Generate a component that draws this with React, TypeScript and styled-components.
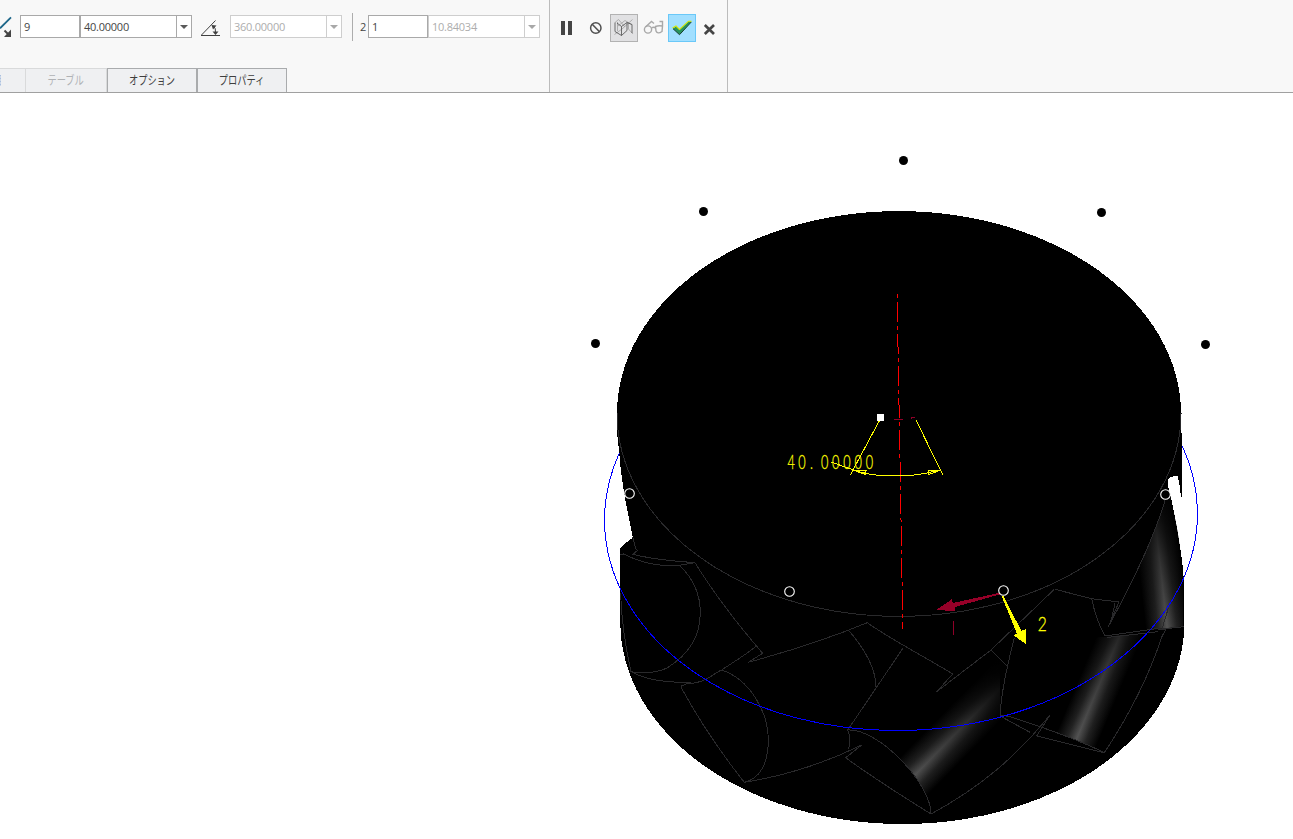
import React from "react";
import styled, { createGlobalStyle } from "styled-components";

const GlobalStyle = createGlobalStyle`
  html, body { margin: 0; padding: 0; background: #fff; overflow: hidden; }
  * { box-sizing: border-box; }
`;

const uiFont = `"Open Sans", "Noto Sans CJK JP", sans-serif`;

const Page = styled.div`
  display: flex;
  flex-direction: column;
  width: 1293px;
  height: 839px;
  overflow: hidden;
  background: #fff;
  font-family: ${uiFont};
`;

const Ribbon = styled.header`
  display: flex;
  flex: none;
  height: 93px;
  background: #f8f8f8;
  border-bottom: 1px solid #a0a0a0;
`;

const SettingsGroup = styled.section`
  display: flex;
  flex-direction: column;
  justify-content: space-between;
  width: 550px;
  padding-top: 13px;
  border-right: 1px solid #bcbcbc;
`;

const ActionGroup = styled.section`
  display: flex;
  align-items: flex-start;
  width: 178px;
  padding: 14px 0 0 4px;
  border-right: 1px solid #bcbcbc;
`;

const Controls = styled.div`
  display: flex;
  align-items: flex-start;
  height: 30px;
`;

const Glyph = styled.svg<{ $before?: number; $gap?: number }>`
  display: block;
  flex: none;
  margin-left: ${(p) => p.$before ?? 0}px;
  margin-right: ${(p) => p.$gap ?? 0}px;
`;

const Field = styled.div<{ $width: number; $disabled?: boolean }>`
  display: flex;
  flex: none;
  width: ${(p) => p.$width}px;
  height: 23px;
  margin-top: 2px;
  border: 1px solid ${(p) => (p.$disabled ? "#cecece" : "#a9a9a9")};
  background: #fff;
  color: ${(p) => (p.$disabled ? "#adadad" : "#454545")};
  font-size: 11px;
  line-height: 22px;
  letter-spacing: -0.25px;
`;

const Value = styled.span`
  flex: 1;
  padding-left: 3px;
`;

const DropButton = styled.span<{ $disabled?: boolean }>`
  display: flex;
  align-items: center;
  justify-content: center;
  width: 15px;
  border-left: 1px solid ${(p) => (p.$disabled ? "#cecece" : "#a9a9a9")};
  &::after {
    content: "";
    border: 4px solid transparent;
    border-bottom: 0;
    border-top-color: ${(p) => (p.$disabled ? "#a8a8a8" : "#5a5a5a")};
  }
`;

const Divider = styled.span`
  width: 1px;
  height: 28px;
  margin: 0 7px 0 10px;
  background: #adadad;
`;

const DirectionLabel = styled.span`
  width: 8px;
  margin-top: 3px;
  color: #454545;
  font-size: 11px;
  line-height: 22px;
`;

const Tabs = styled.nav`
  display: flex;
  height: 24px;
`;

const Tab = styled.div<{ $width: number; $disabled?: boolean }>`
  display: flex;
  align-items: center;
  justify-content: center;
  flex: none;
  width: ${(p) => p.$width}px;
  border: 1px solid ${(p) => (p.$disabled ? "#d9dadb" : "#a9abad")};
  border-bottom: 0;
  background: #eff0f2;
  color: ${(p) => (p.$disabled ? "#b0b2b5" : "#3e3e3e")};
  font-size: 12px;
  line-height: 20px;
`;

const NarrowText = styled.span`
  flex: none;
  white-space: nowrap;
  transform: scaleX(0.77);
`;

const ClippedTab = styled.div`
  width: 25px;
  border-top: 1px solid #d9dadb;
  background: #eff0f2;
  padding-top: 6px;
`;

const ToolButton = styled.button<{ $tone?: "pressed" | "accept"; $gap?: number }>`
  display: flex;
  align-items: center;
  justify-content: center;
  width: 28px;
  height: 28px;
  margin: 0 ${(p) => p.$gap ?? 0}px 0 0;
  padding: 0;
  border: 1px solid
    ${(p) => (p.$tone === "pressed" ? "#b2b2b2" : p.$tone === "accept" ? "#6ac8f8" : "transparent")};
  background: ${(p) => (p.$tone === "pressed" ? "#e1e1e3" : p.$tone === "accept" ? "#a1dfff" : "transparent")};
`;

const Viewport = styled.main`
  flex: none;
  height: 746px;
`;

const Scene = styled.svg`
  display: block;
`;

const edges = [
  "M617 413.5 A282 203 0 0 0 1181 413.5",
  "M620 554.3 H625 M623 553.5 C640 563 661 567 679 565.3 L695 562.7",
  "M632.7 537 L636 549.3 L637.7 550.3 L633.3 554 L631.7 554 C650 559 672 561 695 562.7",
  "M679.3 565.3 C692 577 700.3 592 700.3 613 C700.3 636 688 655 667 668 C655 673.5 642 673.5 631 671.7",
  "M695 562.7 C713 592 733 619 762.7 653.3 L748.3 662.3 C790 651 830 638 867.3 622.7 C890 639 920 654 952.7 674 L936.7 691.7 L991 650 L1054.3 589.3",
  "M620.5 593 C622 625 626 650 631 671.7 C648 681 668 683 691.7 682",
  "M687 683.5 C705 684 712 674 721.7 670 C735 661 744 656 755.7 646.7",
  "M690 682.7 L681.7 685.7 L681 687.3 C700 722 721 753 744.3 782.3",
  "M721.7 670 C749 679 768.3 711 768.3 740 C768.3 763 760 779 744.3 782.3",
  "M744.3 782.3 C784 776 825 763 861.7 745 L845.7 757.7 C872 777 902 796 931 814",
  "M849.3 631 C862 646 876 667 876 687.3",
  "M903.3 647.7 C884 676 866 703 847.7 730 Q851.5 738 848.7 749",
  "M847.7 730 C878 728 931 783 931 814",
  "M931 814 C979 788 1015 758 1050 715 L1036.7 736 L1104.3 752.7",
  "M991 650 L1007.3 666",
  "M1014.3 638.3 C1007 666 1001 695 1000 716 L1030 732.3",
  "M1000 715 L1010 716.7 C1042 727 1075 738 1104.3 752.7",
  "M1055 589.3 L1091.7 598.7 L1119 602 L1108.3 626.7 M1115 603 L1111 622",
  "M1166 497 C1155 535 1138 570 1119 606.7 L1108.3 626.7",
  "M1091.7 598.7 Q1096 620 1105 636 L1158 628.5 M1107 637.5 L1158 631.7 M1158 629.5 L1184 626.7",
  "M1168.3 608.3 L1162 629 L1166 629 L1161.7 637 C1148 679 1128 717 1104.3 752.7",
];

const remoteMembers = [
  [903.5, 160.5],
  [703.5, 211.5],
  [1101.5, 212.5],
  [595.5, 343.5],
  [1205.5, 344.5],
];

const nearMembers = [
  [629.5, 493.5],
  [789.5, 591.5],
  [1003.5, 590.5],
  [1165.5, 494.5],
];

const dimensionDigits = [787.5, 798.3, 810, 821, 832, 843.3, 854.5, 865.8];

function PatternModel() {
  return (
    <Scene width="1293" height="746" viewBox="0 93 1293 746">
      <defs>
        <linearGradient id="across">
          <stop offset="0" stopColor="#000" />
          <stop offset="0.28" stopColor="#222" />
          <stop offset="0.5" stopColor="#525252" />
          <stop offset="0.72" stopColor="#222" />
          <stop offset="1" stopColor="#000" />
        </linearGradient>
        <linearGradient id="along" x1="0" y1="0" x2="0" y2="1">
          <stop offset="0" stopColor="#000" />
          <stop offset="0.45" stopColor="#000" stopOpacity="0.4" />
          <stop offset="0.9" stopColor="#000" stopOpacity="0" />
        </linearGradient>
        <clipPath id="pocketFront">
          <path d="M847.7 730 C878 728 931 783 931 814 L1000 760 V640 H850 Z" />
        </clipPath>
        <clipPath id="pocketRight">
          <path d="M1000 716 L1010 716.7 C1042 727 1075 738 1104.3 752.7 L1162 637 L1158 631.7 L1105 637 L1010 640 Z" />
        </clipPath>
        <clipPath id="pocketSide">
          <path d="M1166 497 C1155 535 1138 570 1119 606.7 L1108 634 L1158 629 L1183 626.5 V590 C1182 550 1177 525 1170 497 Z" />
        </clipPath>
        <clipPath id="frontArc">
          <path d="M590 453 H900 V446 H1210 V740 H590 Z" />
        </clipPath>
      </defs>

      <g shapeRendering="crispEdges">
        <path
          fill="#000"
          d="M617 413.5 A282 202.5 0 0 1 1181 413.5 L1181.7 440 V497 H1181 L1179.3 483 L1177.5 475.7 L1170 477 L1168.3 479 V487 C1172 500 1176 522 1180 547 Q1184 570 1184 590 L1184.5 622 A282 202 0 0 1 620.3 622 L619.7 549 Q627 541 633 538 Q621 483 619.3 453 L617.3 435 Z"
        />
      </g>

      <g clipPath="url(#pocketFront)">
        <g transform="translate(915 775) rotate(44.5)">
          <rect x="-23" y="-140" width="46" height="160" fill="url(#across)" />
          <rect x="-24" y="-141" width="48" height="162" fill="url(#along)" />
        </g>
      </g>
      <g clipPath="url(#pocketRight)">
        <g transform="translate(1077 738) rotate(22.7)">
          <rect x="-21" y="-130" width="42" height="145" fill="url(#across)" />
          <rect x="-22" y="-175" width="44" height="191" fill="url(#along)" />
        </g>
      </g>
      <g clipPath="url(#pocketSide)">
        <g transform="translate(1169 630) rotate(-6.4)">
          <rect x="-23" y="-140" width="43" height="150" fill="url(#across)" />
          <rect x="-24" y="-141" width="45" height="152" fill="url(#along)" />
        </g>
      </g>

      <g fill="none" shapeRendering="crispEdges">
        <g stroke="#29292b">
          {edges.map((d) => (
            <path key={d} d={d} />
          ))}
        </g>
        <g clipPath="url(#frontArc)">
          <ellipse cx="901" cy="516.7" rx="296.5" ry="213.8" transform="rotate(-1.3 901 516.7)" stroke="#00f" />
        </g>
        <path d="M897.1 294 L902.9 629" stroke="#f00" strokeDasharray="4 4 20 4" />
        <path d="M894 419.5 H903 M911 418.5 L912 417.5 H915 M953.5 621 V635" stroke="#8f0028" />
        <g stroke="#ff0">
          <path d="M879.5 420.5 L850.3 475 M916 420 L942.7 474.7" />
          <path d="M831 462 L853 469.8 Q870 475.5 884 475.5 H910 Q926 474 941 469.8" />
          <path d="M853 470 L866 470.5 L865.5 474.5 Z M941 470 L928.5 470.5 L928.5 474.5 Z" />
        </g>
      </g>

      <rect x="877" y="414" width="7" height="7" fill="#fff" />

      <g fill="#ff0" stroke="#ff0" strokeWidth="0.3" fontFamily="Lato, sans-serif" fontWeight="300" fontSize="19.5">
        <text transform="scale(0.65 1)" y="469" x={dimensionDigits.map((x) => x / 0.65).join(" ")}>
          40.00000
        </text>
        <text transform="scale(0.8 1)" x={1037.8 / 0.8} y="631">
          2
        </text>
      </g>

      <g shapeRendering="crispEdges">
        <path fill="#960028" d="M936.7 609.7 L951.7 599.3 L953 603 L999.5 592.8 V594.5 L955 607 V611.5 Z" />
        <path fill="#ff0" d="M1001.6 596 L1003.4 596 L1021.3 630.8 L1025.7 629.3 V643.7 L1013.3 635.3 L1017 633.8 Z" />
      </g>

      {remoteMembers.map(([x, y]) => (
        <circle key={x} cx={x} cy={y} r="4.5" />
      ))}
      {nearMembers.map(([x, y]) => (
        <circle key={x} cx={x} cy={y} r="4.8" fill="#000" stroke="#fff" strokeWidth="1.1" />
      ))}
    </Scene>
  );
}

function Combo({ value, disabled }: { value: string; disabled?: boolean }) {
  return (
    <Field $width={112} $disabled={disabled}>
      <Value>{value}</Value>
      <DropButton $disabled={disabled} />
    </Field>
  );
}

export default function App() {
  return (
    <Page>
      <GlobalStyle />
      <Ribbon>
        <SettingsGroup>
          <Controls>
            <Glyph width="12" height="28" viewBox="0 13 12 28" $gap={8}>
              <path d="M0 28.3 L11 17.3" stroke="#1c6689" strokeWidth="1.8" />
              <path d="M4.5 30.5 L9 35" stroke="#454545" strokeWidth="2" />
              <path d="M11 29.5 V37 H4 Z" fill="#454545" />
            </Glyph>
            <Field $width={60}>
              <Value>9</Value>
            </Field>
            <Combo value="40.00000" />
            <Glyph width="20" height="28" viewBox="200 13 20 28" $before={8} $gap={10}>
              <path d="M201 35.5 H220 M201.5 35 L215.5 20.5" stroke="#404040" fill="none" />
              <path d="M213.5 26 Q216 28 215.5 33" stroke="#404040" fill="none" />
              <path d="M211.5 25 L216.5 25.5 L213 29.5 Z M212.5 31.5 H218.5 L215.5 35 Z" fill="#404040" />
            </Glyph>
            <Combo value="360.00000" disabled />
            <Divider />
            <DirectionLabel>2</DirectionLabel>
            <Field $width={60}>
              <Value>1</Value>
            </Field>
            <Combo value="10.84034" disabled />
          </Controls>
          <Tabs>
            <ClippedTab>
              <Glyph width="2" height="12" viewBox="0 0 2 12">
                <path d="M0 0.5 H1 M0 3.5 H1 M0 6.5 H1 M0 9.5 H1" stroke="#a9c0e0" strokeWidth="2" />
              </Glyph>
            </ClippedTab>
            <Tab $width={82} $disabled>
              <NarrowText>テーブル</NarrowText>
            </Tab>
            <Tab $width={90}>
              <NarrowText>オプション</NarrowText>
            </Tab>
            <Tab $width={90}>
              <NarrowText>プロパティ</NarrowText>
            </Tab>
          </Tabs>
        </SettingsGroup>
        <ActionGroup>
          <ToolButton aria-label="Pause">
            <Glyph width="28" height="28" viewBox="554 14 28 28">
              <path d="M561 21 H565 V35 H561 Z M568 21 H572 V35 H568 Z" fill="#454545" />
            </Glyph>
          </ToolButton>
          <ToolButton aria-label="No preview">
            <Glyph width="28" height="28" viewBox="581 14 28 28">
              <circle cx="594.8" cy="28" r="5.2" fill="none" stroke="#505050" strokeWidth="1.5" />
              <path d="M591.2 24.3 L598.5 31.7" stroke="#505050" strokeWidth="1.6" />
            </Glyph>
          </ToolButton>
          <ToolButton $tone="pressed" aria-label="Attached preview" $gap={2}>
            <Glyph width="26" height="26" viewBox="611 15 26 26">
              <g fill="none" strokeWidth="0.8">
                <path
                  d="M615 22.5 L618.5 19.5 L625 27 M632.5 19.5 L622 29 L614.5 34.5 M618 26 L625 20.5 L631.5 24.5 M617.5 22 V31 M628.5 22 V29 L633 34"
                  stroke="#a0a0a0"
                />
                <path
                  d="M615 22.5 V31.5 M621.5 26.5 L627 22.5 V30.5 L621.5 35.5 V26.5 L617 23 M632 24.5 V33 M615 31.5 L621.5 35.5 M627 22.5 L632 24.5"
                  stroke="#4c4c4c"
                />
              </g>
            </Glyph>
          </ToolButton>
          <ToolButton aria-label="Verify">
            <Glyph width="26" height="26" viewBox="640.5 15 26 26">
              <g fill="none" stroke="#a8a8a8" strokeWidth="1.4">
                <circle cx="647.5" cy="29.5" r="3.6" />
                <path d="M655 26.5 Q658 25.2 662 26 L661.5 31.5 Q657 34.5 655.5 31 Z M651 28 Q653 26.5 655 28 M645 27 L651 21.5 L653.5 23.5 M662 26 V21.5 H659" />
              </g>
            </Glyph>
          </ToolButton>
          <ToolButton $tone="accept" aria-label="Accept" $gap={1}>
            <Glyph width="26" height="26" viewBox="669 15 26 26">
              <path d="M673 28.5 L676 26.5 L679.5 30 L688.5 21.5 H691.5 L679.5 34.5 Z" fill="#27945c" />
              <path d="M672.5 28 L676 26 L679.5 29.5 L688.5 21.2 H691.5" fill="none" stroke="#d7e800" strokeWidth="1.1" />
              <path d="M673 28.7 L679.5 34.7 L691.3 22" fill="none" stroke="#143c2b" strokeWidth="1" />
            </Glyph>
          </ToolButton>
          <ToolButton aria-label="Cancel">
            <Glyph width="26" height="26" viewBox="698 15 26 26">
              <path d="M704.8 25 L714 34 M714 25 L704.8 34" stroke="#454545" strokeWidth="2.7" />
            </Glyph>
          </ToolButton>
        </ActionGroup>
      </Ribbon>
      <Viewport>
        <PatternModel />
      </Viewport>
    </Page>
  );
}
